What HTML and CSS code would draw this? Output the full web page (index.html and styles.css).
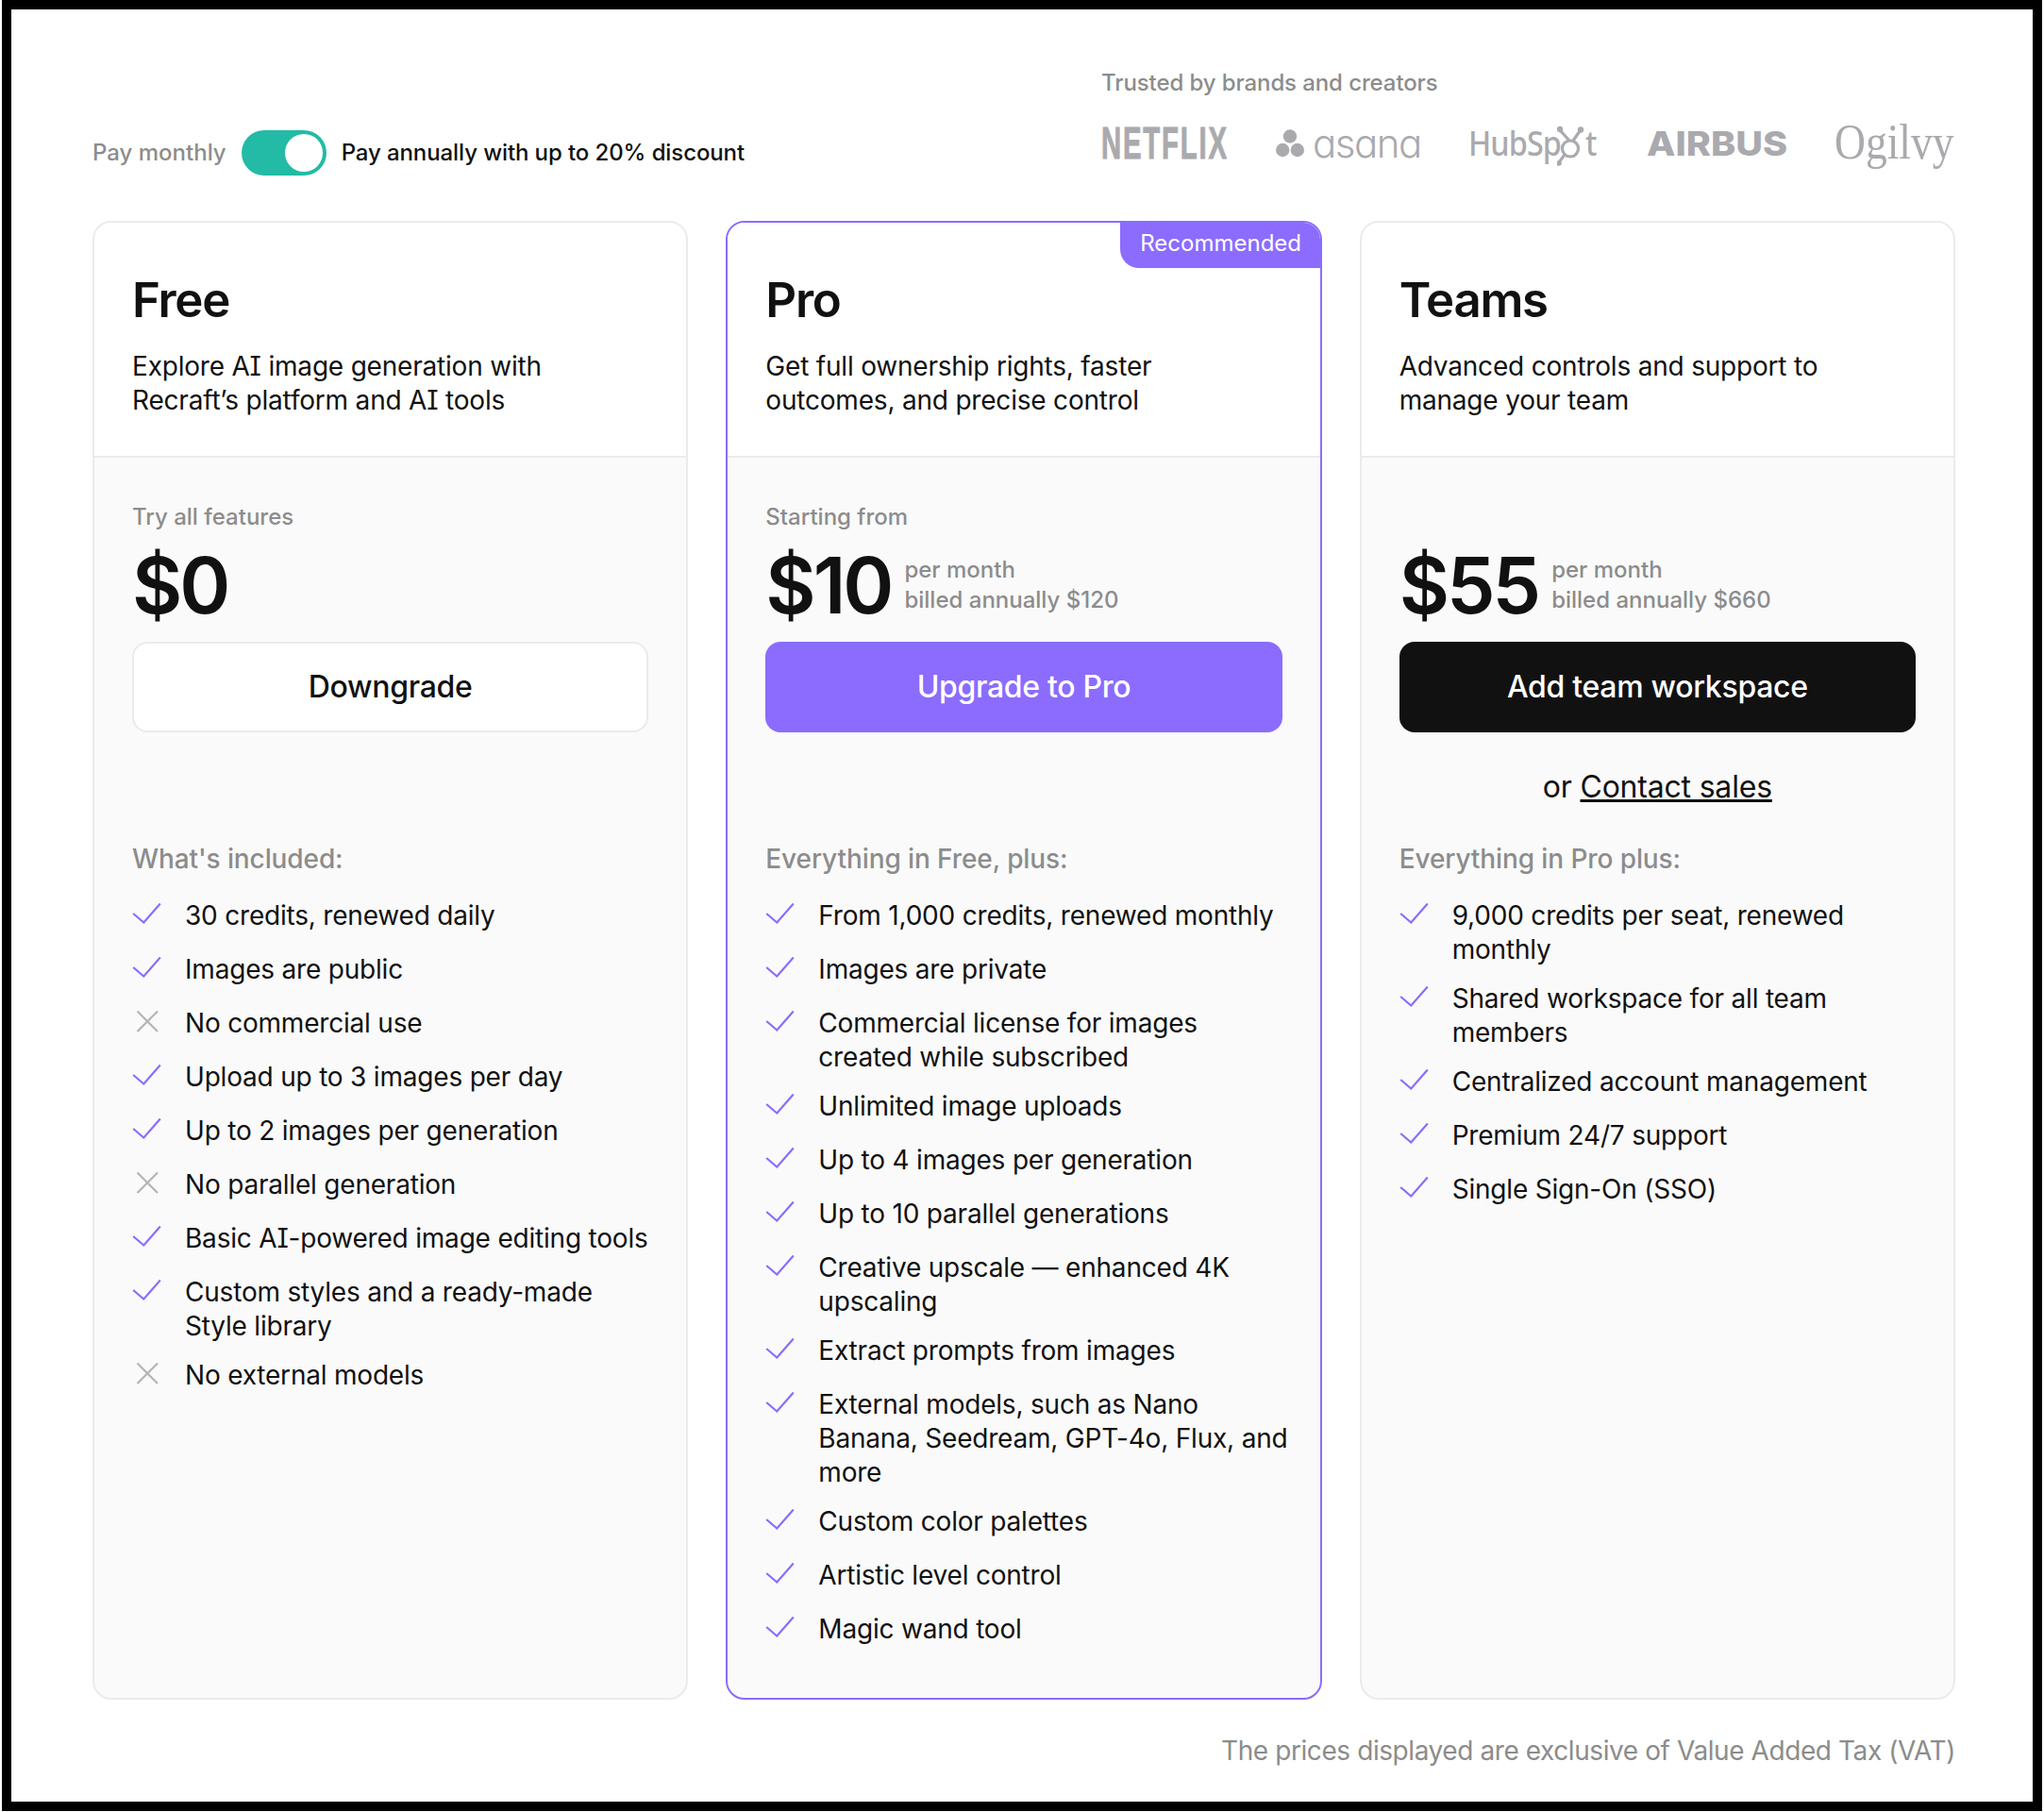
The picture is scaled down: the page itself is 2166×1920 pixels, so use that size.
FILE: index.html
```html
<!DOCTYPE html>
<html>
<head>
  <title>Pricing</title>
  <link rel="stylesheet" href="styles.css">
  <meta charset="utf-8">
</head>
<body>
  <svg class="sprite">
    <symbol id="check" viewBox="0 0 32 32"><path d="M1.2 16L12.3 25.5L29.8 5.5" fill="none" stroke="#8b6cff" stroke-width="2.2"/></symbol>
    <symbol id="cross" viewBox="0 0 32 32"><path d="M5.5 5.5L27 27M27 5.5L5.5 27" fill="none" stroke="#b4b4b4" stroke-width="2.2"/></symbol>
  </svg>
  <div class="frame">
    <div class="top">
      <div class="billing">
        <span class="muted">Pay monthly</span>
        <span class="toggle"><span class="knob"></span></span>
        <span class="annual">Pay annually with up to 20% discount</span>
      </div>
      <div class="trusted">
        <div class="muted">Trusted by brands and creators</div>
        <div class="logos">
          <span class="logo netflix"><span>NETFLIX</span></span>
          <span class="logo asana">
            <svg width="30" height="30" viewBox="0 0 30 30"><circle cx="15" cy="7.5" r="7.2"/><circle cx="7.2" cy="22" r="7.2"/><circle cx="22.8" cy="22" r="7.2"/></svg>
            <span>asana</span>
          </span>
          <span class="logo hubspot">
            <span class="hub">HubSp</span>
            <svg width="30" height="44" viewBox="0 0 30 44" fill="none" stroke="#aaaaae" stroke-width="3.2"><circle cx="14" cy="24.5" r="8.5"/><path d="M13 16L4 6M17 16L24 6M8 31L2 39"/><circle cx="3" cy="4" r="3.2" fill="#aaaaae" stroke="none"/><circle cx="25" cy="4.5" r="3.2" fill="#aaaaae" stroke="none"/><circle cx="2" cy="40" r="2.8" fill="#aaaaae" stroke="none"/></svg>
            <span class="hub-t">t</span>
          </span>
          <span class="logo airbus"><span>AIRBUS</span></span>
          <span class="logo ogilvy"><span>Ogilvy</span></span>
        </div>
      </div>
    </div>

    <div class="plans">
      <section class="card">
        <div class="card-head">
          <h2>Free</h2>
          <p class="serif-i">Explore AI image generation with Recraft’s platform and AI tools</p>
        </div>
        <div class="card-body">
          <div class="muted">Try all features</div>
          <div class="price-row"><span class="price">$0</span></div>
          <a class="btn btn-white">Downgrade</a>
          <div class="under-btn"></div>
          <div class="list-title">What's included:</div>
          <ul class="features">
            <li><svg><use href="#check"/></svg><span>30 credits, renewed daily</span></li>
            <li><svg><use href="#check"/></svg><span>Images are public</span></li>
            <li><svg><use href="#cross"/></svg><span>No commercial use</span></li>
            <li><svg><use href="#check"/></svg><span>Upload up to 3 images per day</span></li>
            <li><svg><use href="#check"/></svg><span>Up to 2 images per generation</span></li>
            <li><svg><use href="#cross"/></svg><span>No parallel generation</span></li>
            <li class="serif-i"><svg><use href="#check"/></svg><span>Basic AI-powered image editing tools</span></li>
            <li><svg><use href="#check"/></svg><span>Custom styles and a ready-made Style library</span></li>
            <li><svg><use href="#cross"/></svg><span>No external models</span></li>
          </ul>
        </div>
      </section>

      <section class="card card-pro">
        <span class="badge">Recommended</span>
        <div class="card-head">
          <h2>Pro</h2>
          <p>Get full ownership rights, faster outcomes, and precise control</p>
        </div>
        <div class="card-body">
          <div class="muted">Starting from</div>
          <div class="price-row"><span class="price">$10</span><span class="per muted">per month<br>billed annually $120</span></div>
          <a class="btn btn-purple">Upgrade to Pro</a>
          <div class="under-btn"></div>
          <div class="list-title">Everything in Free, plus:</div>
          <ul class="features">
            <li><svg><use href="#check"/></svg><span>From 1,000 credits, renewed monthly</span></li>
            <li><svg><use href="#check"/></svg><span>Images are private</span></li>
            <li><svg><use href="#check"/></svg><span>Commercial license for images created while subscribed</span></li>
            <li><svg><use href="#check"/></svg><span>Unlimited image uploads</span></li>
            <li><svg><use href="#check"/></svg><span>Up to 4 images per generation</span></li>
            <li><svg><use href="#check"/></svg><span>Up to 10 parallel generations</span></li>
            <li><svg><use href="#check"/></svg><span>Creative upscale — enhanced 4K upscaling</span></li>
            <li><svg><use href="#check"/></svg><span>Extract prompts from images</span></li>
            <li><svg><use href="#check"/></svg><span>External models, such as Nano Banana, Seedream, GPT-4o, Flux, and more</span></li>
            <li><svg><use href="#check"/></svg><span>Custom color palettes</span></li>
            <li><svg><use href="#check"/></svg><span>Artistic level control</span></li>
            <li><svg><use href="#check"/></svg><span>Magic wand tool</span></li>
          </ul>
        </div>
      </section>

      <section class="card">
        <div class="card-head">
          <h2>Teams</h2>
          <p>Advanced controls and support to manage your team</p>
        </div>
        <div class="card-body">
          <div class="muted">&nbsp;</div>
          <div class="price-row"><span class="price">$55</span><span class="per muted">per month<br>billed annually $660</span></div>
          <a class="btn btn-black">Add team workspace</a>
          <div class="under-btn">or <a class="sales">Contact sales</a></div>
          <div class="list-title">Everything in Pro plus:</div>
          <ul class="features">
            <li><svg><use href="#check"/></svg><span>9,000 credits per seat, renewed monthly</span></li>
            <li><svg><use href="#check"/></svg><span>Shared workspace for all team members</span></li>
            <li><svg><use href="#check"/></svg><span>Centralized account management</span></li>
            <li><svg><use href="#check"/></svg><span>Premium 24/7 support</span></li>
            <li><svg><use href="#check"/></svg><span>Single Sign-On (SSO)</span></li>
          </ul>
        </div>
      </section>
    </div>

    <div class="vat">The prices displayed are exclusive of Value Added Tax (VAT)</div>
  </div>
</body>
</html>
```

FILE: styles.css
```css
* {
  box-sizing: border-box;
}
body {
  margin: 0;
  background: #fff;
  color: #111;
  font-family: Inter, "Liberation Sans", sans-serif;
  font-size: 28px;
  line-height: 36px;
  letter-spacing: -.2px;
}
.sprite {
  display: none;
}
.serif-i {
  font-feature-settings: "cv08";
}
.frame {
  width: 2162px;
  height: 1919px;
  margin: 0 2px;
  border: 10px solid #000;
  padding: 54px 82px 0 86px;
  background: #fff;
}
.muted {
  color: #8c8c8c;
}

/* top row */
.top {
  display: flex;
  justify-content: space-between;
  align-items: flex-end;
  height: 170px;
}
.billing {
  display: flex;
  align-items: center;
  gap: 16px;
  font-size: 24px;
  line-height: 32px;
  font-weight: 500;
  letter-spacing: 0;
  margin-bottom: 48px;
}
.annual {
  letter-spacing: -.1px;
}
.toggle {
  display: flex;
  justify-content: flex-end;
  width: 90px;
  height: 48px;
  padding: 4px;
  border-radius: 24px;
  background: #23bba5;
}
.knob {
  width: 40px;
  height: 40px;
  border-radius: 50%;
  background: #fff;
}
.trusted {
  width: 905px;
  font-size: 24px;
  line-height: 32px;
  font-weight: 500;
  letter-spacing: -.1px;
  margin-bottom: 56px;
}
.logos {
  display: flex;
  gap: 50px;
  align-items: center;
  height: 52px;
  margin-top: 22px;
  color: #aaaaae;
  letter-spacing: 0;
}
.logo {
  display: flex;
  align-items: center;
  white-space: nowrap;
}
.logo > span {
  display: block;
  transform-origin: left center;
}
.netflix {
  width: 135px;
  font-family: "Liberation Sans", sans-serif;
  font-weight: 700;
  font-size: 48px;
  letter-spacing: 3px;
  -webkit-text-stroke: 1px #aaaaae;
}
.netflix span {
  transform: scaleX(.61);
}
.asana {
  width: 154px;
  font-size: 42px;
  font-weight: 300;
  letter-spacing: -1.5px;
  font-feature-settings: "cv11";
}
.asana svg {
  flex: none;
  fill: #aaaaae;
  margin-right: 9px;
}
.hubspot {
  width: 139px;
  font-size: 36px;
  font-family: "Noto Sans", sans-serif;
  letter-spacing: -1px;
}
.hubspot svg {
  flex: none;
  margin-top: 6px;
}
.hub {
  flex: none;
  width: 94px;
  transform: scaleX(.9);
}
.hub-t {
  flex: none;
  width: 15px;
  transform: scaleX(.9);
}
.airbus {
  width: 149px;
  font-weight: 800;
  font-size: 36px;
}
.airbus span {
  transform: scaleX(1.1);
}
.ogilvy {
  width: 127px;
  margin-bottom: 4px;
  font-family: "Liberation Serif", serif;
  font-weight: 400;
  font-size: 53px;
}
.ogilvy span {
  transform: scaleX(.86);
}

/* plan cards */
.plans {
  display: grid;
  grid-template-columns: repeat(3, 1fr);
  gap: 40px;
  height: 1567px;
}
.card {
  position: relative;
  display: flex;
  flex-direction: column;
  border: 2px solid #ebebeb;
  border-radius: 20px;
  background: #fafafa;
  overflow: hidden;
}
.card-pro {
  border-color: #8b6cff;
}
.badge {
  position: absolute;
  top: -2px;
  right: -2px;
  width: 214px;
  height: 50px;
  border-radius: 0 20px 0 20px;
  background: #8b6cff;
  color: #fff;
  font-size: 24px;
  line-height: 48px;
  letter-spacing: 0;
  text-align: center;
}
.card-head {
  height: 249px;
  padding: 51px 40px 0;
  border-bottom: 2px solid #ebebeb;
  background: #fff;
}
h2 {
  margin: 0 0 23px;
  font-size: 51px;
  line-height: 62px;
  font-weight: 600;
  letter-spacing: -1.3px;
}
.card-head p {
  margin: -2px 0 0;
  max-width: 500px;
}
.card-body {
  padding: 47px 40px 0;
}
.card-body > .muted {
  font-size: 24px;
  line-height: 32px;
  font-weight: 500;
  letter-spacing: 0;
}
.price-row {
  display: flex;
  align-items: center;
  gap: 14px;
  height: 84px;
  margin: 15px 0 17px;
}
.price {
  font-size: 82px;
  line-height: 84px;
  font-weight: 600;
  letter-spacing: -3px;
}
.per {
  margin-top: -2px;
  font-size: 24px;
  line-height: 32px;
  font-weight: 500;
  letter-spacing: 0;
}
.btn {
  display: block;
  height: 96px;
  border-radius: 16px;
  font-size: 32px;
  font-weight: 500;
  line-height: 96px;
  letter-spacing: -.3px;
  text-align: center;
}
.btn-white {
  border: 2px solid #ebebeb;
  background: #fff;
  line-height: 92px;
}
.btn-purple {
  background: #8b6cff;
  color: #fff;
}
.btn-black {
  background: #111;
  color: #fff;
}
.under-btn {
  height: 116px;
  padding-top: 40px;
  font-size: 32px;
  text-align: center;
}
.sales {
  text-decoration: underline;
}
.list-title {
  color: #8c8c8c;
  font-weight: 500;
  letter-spacing: -.1px;
  margin-bottom: 24px;
}
.features {
  display: flex;
  flex-direction: column;
  gap: 16px;
  margin: 0 -8px 0 0;
  padding: 0;
  list-style: none;
}
.features li {
  display: flex;
  gap: 24px;
  min-height: 41px;
}
.features svg {
  flex: none;
  width: 32px;
  height: 32px;
}
.vat {
  margin-top: 36px;
  text-align: right;
  color: #8c8c8c;
  letter-spacing: -.42px;
}
```
